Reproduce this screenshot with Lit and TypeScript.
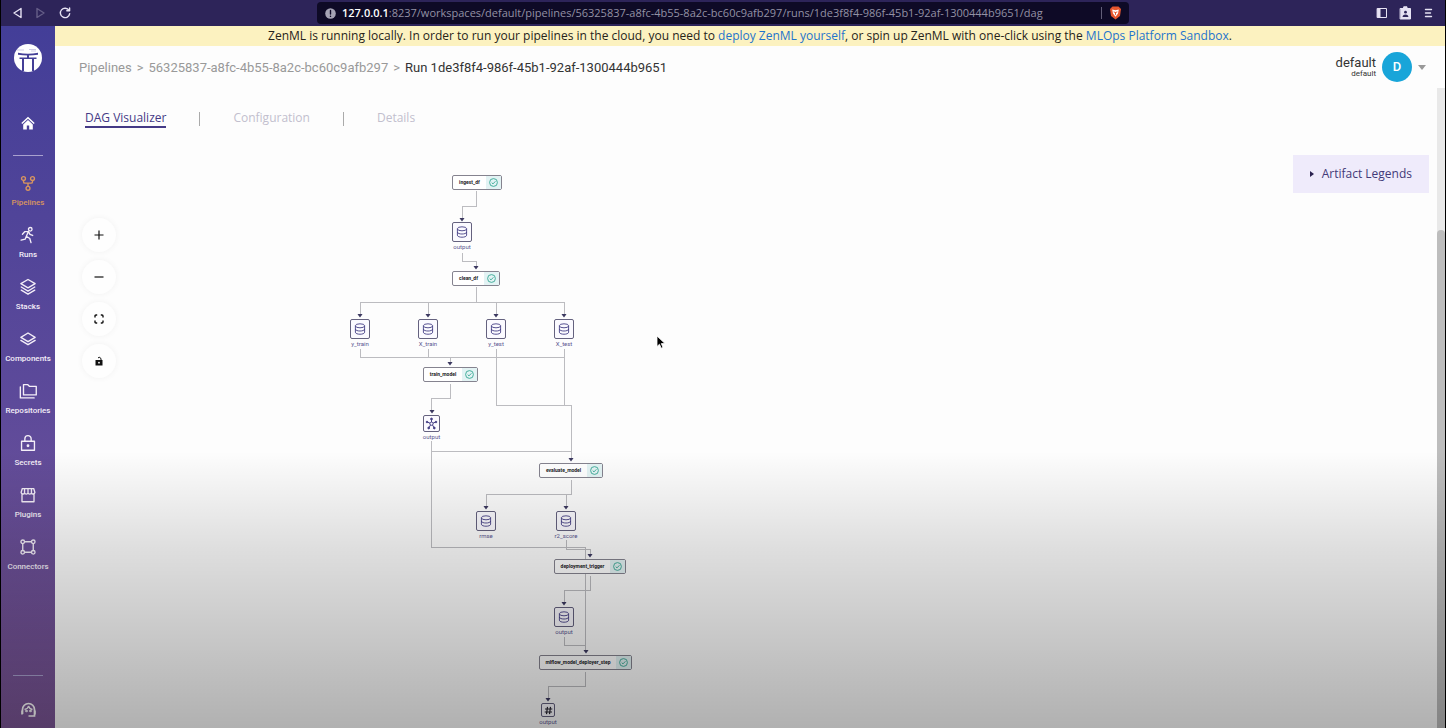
import { LitElement, html, css, svg } from "lit";
import { customElement, property, state } from "lit/decorators.js";
import { classMap } from "lit/directives/class-map.js";
import { styleMap } from "lit/directives/style-map.js";

const navIcons: Record<string, unknown> = {
  pipelines: svg`<circle cx="5" cy="5" r="2.6"/><circle cx="17" cy="5" r="2.6"/><circle cx="11" cy="18" r="2.6"/><path d="M5 7.6v1.6q0 2 2 2h8q2 0 2-2V7.6M11 11.2v4.2"/>`,
  runs: svg`<circle cx="14" cy="3.4" r="2.4"/><path d="M3.6 10l3-3.4 5-.2 2 3.8 3.6 1.4M11.4 6.6l-2.6 6 4.6 3 1.6 5.6M8.8 12.6l-1.6 4-5.4 1.2"/>`,
  stacks: svg`<path d="M11 1l9.5 5.6L11 12.2 1.5 6.6z"/><path d="M2 11l9 5.4 9-5.4M2 15.2l9 5.4 9-5.4"/>`,
  components: svg`<path d="M11 3l9.5 5.8L11 14.6 1.5 8.8z"/><path d="M1.5 12.8L11 18.6l9.5-5.8"/>`,
  repositories: svg`<path d="M5 2.4h5.4l2.4 2.4H22v11.4H5z"/><path d="M.8 5.4v14.8h18.4"/>`,
  secrets: svg`<path d="M2.4 8.6h17.2v12H2.4zM6.8 8.6V5.4a4.2 4.2 0 018.4 0v3.2"/><circle cx="11" cy="14.6" r="1"/>`,
  plugins: svg`<path d="M3.4 2.4h15.2l1.6 5.2a2.4 2.4 0 01-4.6.6 2.4 2.4 0 01-4.6 0 2.4 2.4 0 01-4.6 0 2.4 2.4 0 01-4.6-.6zM3 10v10h16V10M6.4 8V2.4M11 8V2.4M15.6 8V2.4"/>`,
  connectors: svg`<circle cx="4" cy="4" r="2.4"/><circle cx="18" cy="4" r="2.4"/><circle cx="4" cy="18" r="2.4"/><circle cx="18" cy="18" r="2.4"/><path d="M6.4 4h9.2M6.4 18h9.2M4 6.4v9.2M18 6.4v9.2"/>`,
};

const navItems = ["Pipelines", "Runs", "Stacks", "Components", "Repositories", "Secrets", "Plugins", "Connectors"];

interface GraphNode {
  kind: "step" | "data" | "model" | "hash";
  label: string;
  x: number;
  y: number;
  w: number;
}

const pan = { x: -55, y: -150 };

const nodes: GraphNode[] = [
  { kind: "step", label: "ingest_df", x: 452, y: 175, w: 50 },
  { kind: "data", label: "output", x: 452, y: 222, w: 20 },
  { kind: "step", label: "clean_df", x: 452, y: 271, w: 48 },
  { kind: "data", label: "y_train", x: 350, y: 319, w: 20 },
  { kind: "data", label: "X_train", x: 418, y: 319, w: 20 },
  { kind: "data", label: "y_test", x: 486, y: 319, w: 20 },
  { kind: "data", label: "X_test", x: 554, y: 319, w: 20 },
  { kind: "step", label: "train_model", x: 423, y: 367, w: 55 },
  { kind: "model", label: "output", x: 423, y: 415, w: 17 },
  { kind: "step", label: "evaluate_model", x: 539, y: 463, w: 64 },
  { kind: "data", label: "rmse", x: 476, y: 511, w: 20 },
  { kind: "data", label: "r2_score", x: 556, y: 511, w: 20 },
  { kind: "step", label: "deployment_trigger", x: 554, y: 559, w: 72 },
  { kind: "data", label: "output", x: 554, y: 607, w: 20 },
  { kind: "step", label: "mlflow_model_deployer_step", x: 539, y: 655, w: 93 },
  { kind: "hash", label: "output", x: 541, y: 703, w: 14 },
];

const edges = [
  "M476 191V206H462V220",
  "M462 253V261H476V268",
  "M476 287V302H360V316",
  "M476 287V302H428V316",
  "M476 287V302H496V316",
  "M476 287V302H564V316",
  "M360 349V357H450V364",
  "M428 349V357H450V364",
  "M496 349V357H450V364",
  "M564 349V357H450V364",
  "M496 349V405H571V460",
  "M564 349V405H571V460",
  "M450 384V398H431V412",
  "M431 441V451H571V460",
  "M431 441V547H585V652",
  "M571 480V494H486V508",
  "M571 480V494H566V508",
  "M566 540V549H590V556",
  "M590 576V590H564V604",
  "M564 637V645H585V652",
  "M585 672V686H548V700",
];

const arrows = [
  [462, 222], [476, 270], [360, 318], [428, 318], [496, 318], [564, 318], [450, 366], [432, 414],
  [571, 462], [486, 510], [566, 510], [590, 558], [564, 606], [586, 654], [548, 702],
];

@customElement("browser-bar")
export class BrowserBar extends LitElement {
  static styles = css`
    :host { display: grid; grid-template-columns: 1fr minmax(0, 812px) 1fr; align-items: center; height: 26px; background: #2d2459; color: #e6e2f3; font-family: "Open Sans", sans-serif; }
    button { padding: 0; border: 0; background: none; color: inherit; display: flex; }
    svg { display: block; fill: none; stroke: currentColor; stroke-width: 1.4; stroke-linejoin: round; stroke-linecap: round; }
    .thin { stroke-width: 1; }
    .left { display: flex; gap: 12px; padding-left: 10px; }
    .right { display: flex; justify-content: flex-end; align-items: center; gap: 11px; padding-right: 12px; }
    .off { opacity: 0.3; }
    .address { display: flex; align-items: center; gap: 6px; height: 22px; padding: 0 6px 0 8px; border-radius: 4px; background: #0e0a26; font-size: 11px; white-space: nowrap; }
    .url { flex: 1; overflow: hidden; color: #9391a4; }
    .host { color: #fff; font-weight: 600; }
    .rule { width: 1px; height: 12px; background: #625e78; }
  `;
  render() {
    return html`
      <div class="left">
        <button aria-label="Back"><svg width="12" height="12" viewBox="0 0 12 12"><path d="M10 1.5v9L3 6z"/></svg></button>
        <button aria-label="Forward" class="off"><svg width="12" height="12" viewBox="0 0 12 12"><path d="M2 1.5v9L9 6z"/></svg></button>
        <button aria-label="Reload"><svg width="12" height="12" viewBox="0 0 12 12"><path d="M10 3.4A4.7 4.7 0 1010.7 6.6M10.600 1v2.800H7.800"/></svg></button>
      </div>
      <div class="address">
        <svg width="11" height="11" viewBox="0 0 11 11" stroke="none"><circle cx="5.500" cy="5.500" r="5.300" fill="#a5a3b4" stroke="none"/><path d="M5.500 2.500v3.500M5.500 8.200v.2" stroke="#0e0a26"/></svg>
        <span class="url"><span class="host">127.0.0.1</span>:8237/workspaces/default/pipelines/56325837-a8fc-4b55-8a2c-bc60c9afb297/runs/1de3f8f4-986f-45b1-92af-1300444b9651/dag</span>
        <span class="rule"></span>
        <svg width="15" height="14" viewBox="0 0 13 14"><path d="M3.500.5h6l2.500 2.500-1 7-4.500 3.500L2 10 1 3z" fill="#e8562d" stroke="none"/><path d="M3.200 3.500l3.300.8 3.300-.8-.8 4-2.500 3.300L4 7.500z" fill="#fff" stroke="none"/><path d="M5 6l1.500.5L8 6M6.500 6.500v2" stroke="#e8562d" stroke-width="1"/></svg>
      </div>
      <div class="right">
        <button aria-label="Side panel"><svg class="thin" width="12" height="12" viewBox="0 0 12 12"><path d="M1.500 1.500h9v9h-9z"/><path d="M2 2h2v8H2z" fill="currentColor"/></svg></button>
        <button aria-label="Profile"><svg width="13" height="14" viewBox="0 0 13 14"><path d="M1.500 2.500h10v10.500h-10zM5 .8h3v2H5z" fill="currentColor" stroke-width="1"/><circle cx="6.500" cy="6.200" r="1.400" fill="#2d2459" stroke="none"/><path d="M3.600 11q0-2.600 2.900-2.600T9.400 11z" fill="#2d2459" stroke="none"/></svg></button>
        <button aria-label="Menu"><svg width="10" height="10" viewBox="0 0 10 10"><path d="M2.500 1.500h6M2.500 5h5M2.500 8.500h6"/></svg></button>
      </div>`;
  }
}

@customElement("side-nav")
export class SideNav extends LitElement {
  @property() active = "Pipelines";
  static styles = css`
    :host { box-sizing: border-box; display: flex; flex-direction: column; align-items: center; width: 54px; flex: none; padding: 18px 0 10px; background: linear-gradient(#433e98, #5d4a9a 54%, #7c5696); color: #f4eef8; font: 500 8px/10px Roboto, sans-serif; }
    a { color: inherit; text-decoration: none; display: flex; flex-direction: column; align-items: center; }
    svg { display: block; }
    .home { margin: 44px 0 25px; }
    .divider { width: 30px; height: 1px; background: #a9a1cf; flex: none; }
    nav { display: flex; flex-direction: column; gap: 18px; margin-top: 18px; }
    .item { gap: 6px; }
    .item svg { width: 18px; height: 18px; fill: none; stroke: currentColor; stroke-width: 1.8; stroke-linejoin: round; stroke-linecap: round; }
    .active { color: #d9955f; }
    .foot { margin-top: auto; }
    .support { margin-top: 25px; }
  `;
  render() {
    return html`
      <a href="#" aria-label="ZenML"><svg width="28" height="28" viewBox="0 0 28 28"><circle cx="14" cy="14" r="14" fill="#fff"/><path d="M4 8.800q10 1.800 20 0v2q-10 1.600-20 0zM5.500 13.400h17v1.600h-17zM8 15h2v12H8zM18 15h2v12h-2zM13 10.500h2V14h-2z" fill="#443f97"/><path d="M3 6h7M15 5.500h7M17 7h5" stroke="#b9b5da" stroke-width=".7"/></svg></a>
      <a class="home" href="#" aria-label="Home"><svg width="14" height="14" viewBox="0 0 14 14"><path d="M7 .8L.3 7l1 1L7 2.800 12.700 8l1-1z" fill="#fff"/><path d="M7 4L2.200 8.400V13.500h3.600V9.600h2.400v3.900h3.600V8.400z" fill="#fff"/></svg></a>
      <div class="divider"></div>
      <nav>
        ${navItems.map((n) => html`<a href="#" class=${classMap({ item: true, active: n === this.active })}><svg viewBox="-1 -1 24 24">${navIcons[n.toLowerCase()]}</svg>${n}</a>`)}
      </nav>
      <div class="divider foot"></div>
      <a class="support" href="#" aria-label="Support"><svg width="17" height="17" viewBox="0 0 17 17" fill="none" stroke="#fff" stroke-width="1.700"><path d="M2.500 13V8.500a6 6 0 0112 0V15H8.500M2 9.500v4M15 9.500v4"/><path d="M4.500 8.500q3.500-.5 4-3.500 1 3 4 3.500" stroke-width="1.300"/><circle cx="6.500" cy="10" r=".5"/><circle cx="10.500" cy="10" r=".5"/></svg></a>`;
  }
}

@customElement("dag-canvas")
export class DagCanvas extends LitElement {
  @state() private legendOpen = false;
  static styles = css`
    :host { position: relative; display: flex; justify-content: space-between; align-items: flex-start; flex: 1; min-height: 0; padding: 5px 8px 0 27px; overflow: hidden; font-family: Roboto, sans-serif; }
    .edges { position: absolute; inset: 0; width: 100%; height: 100%; fill: none; stroke: #bcbcc0; stroke-width: 1; shape-rendering: crispEdges; }
    .edges .tips { fill: #3c3960; stroke: none; shape-rendering: auto; }
    .node { position: absolute; display: flex; box-sizing: border-box; }
    .step { height: 15px; border: 1px solid #85838f; border-radius: 2px; background: #fff; font: 700 5px/13px Roboto, sans-serif; color: #1b1b1f; }
    .step .name { flex: 1; text-align: center; white-space: nowrap; }
    .status { flex: none; display: grid; place-items: center; width: 15px; background: #e3f3f4; }
    .artifact { flex-direction: column; align-items: center; gap: 1px; font-size: 6px; line-height: 7px; color: #5a5590; }
    .box { box-sizing: border-box; display: grid; place-items: center; width: 100%; aspect-ratio: 1; border: 1px solid #65627f; border-radius: 2px; background: #fbfaff; color: #443e85; }
    .artifact .name { white-space: nowrap; }
    svg { display: block; }
    .controls { position: relative; display: flex; flex-direction: column; gap: 8px; padding-top: 63px; }
    .controls button { display: grid; place-items: center; width: 34px; height: 34px; padding: 0; border: 0; border-radius: 50%; background: #fefefe; box-shadow: 0 0 6px rgba(0, 0, 0, 0.05); color: #111; }
    .legend { position: relative; display: flex; align-items: center; gap: 8px; height: 38px; padding: 0 17px; border: 0; background: #efebfb; color: #433a78; font: 400 12px/16px "Open Sans", sans-serif; }
    .tri { border: 3px solid transparent; border-left: 4px solid #2b2250; border-right: 0; }
  `;
  private glyph(kind: string) {
    if (kind === "data")
      return html`<svg width="12" height="12" viewBox="0 0 12 12" fill="none" stroke="currentColor" stroke-width=".9"><ellipse cx="6" cy="2.800" rx="4.600" ry="2"/><path d="M1.400 2.800v6.400c0 2.700 9.200 2.700 9.200 0V2.800M1.400 6c0 2.700 9.200 2.700 9.200 0"/></svg>`;
    if (kind === "model")
      return html`<svg width="13" height="13" viewBox="0 0 13 13" fill="currentColor" stroke="currentColor" stroke-width="1"><circle cx="6.500" cy="6.700" r="1.600" fill="none"/><path d="M6.500 5V2.500M5 6.200L2.300 5M8 6.200L10.700 5M5.500 8L4 10.600M7.500 8L9 10.600"/><circle cx="6.500" cy="2" r=".9"/><circle cx="2" cy="5" r=".8"/><circle cx="11" cy="5" r=".8"/><circle cx="3.700" cy="11" r=".9"/><circle cx="9.300" cy="11" r=".9"/></svg>`;
    return html`<svg width="9" height="9" viewBox="0 0 9 9" fill="none" stroke="#26242f" stroke-width="1.200"><path d="M3.500.8l-1 7.400M6.500.8l-1 7.400M1 3h7.300M.7 6H8"/></svg>`;
  }
  private node(n: GraphNode) {
    const place = styleMap({ left: `${n.x + pan.x}px`, top: `${n.y + pan.y}px`, width: `${n.w}px` });
    if (n.kind === "step")
      return html`<div class="node step" style=${place}><span class="name">${n.label}</span><span class="status"><svg width="9" height="9" viewBox="0 0 9 9" fill="none" stroke="#35a893" stroke-width=".9"><circle cx="4.500" cy="4.500" r="3.900"/><path d="M2.700 4.600l1.300 1.300 2.400-2.600"/></svg></span></div>`;
    return html`<div class="node artifact" style=${place}><span class="box">${this.glyph(n.kind)}</span><span class="name">${n.label}</span></div>`;
  }
  render() {
    return html`
      <svg class="edges" aria-hidden="true"><g transform="translate(${pan.x} ${pan.y})">
        ${edges.map((d) => svg`<path d=${d}/>`)}
        <g class="tips">${arrows.map(([x, y]) => svg`<path d="M${x - 2.5} ${y - 4}h5l-1 1.500-1.500 2-1.500-2z"/>`)}</g>
      </g></svg>
      ${nodes.map((n) => this.node(n))}
      <div class="controls">
        <button aria-label="Zoom in"><svg width="10" height="10" viewBox="0 0 10 10" stroke="currentColor" stroke-width="1.200"><path d="M5 .5v9M.5 5h9"/></svg></button>
        <button aria-label="Zoom out"><svg width="10" height="10" viewBox="0 0 10 10" stroke="currentColor" stroke-width="1.200"><path d="M.5 5h9"/></svg></button>
        <button aria-label="Fit view"><svg width="10" height="10" viewBox="0 0 10 10" fill="none" stroke="currentColor" stroke-width="1.400"><path d="M1 3.400V2q0-1 1-1h1.200M6.800 1H8q1 0 1 1v1.400M9 6.600V8q0 1-1 1H6.800M3.200 9H2Q1 9 1 8V6.600"/></svg></button>
        <button aria-label="Toggle interactivity"><svg width="8" height="10" viewBox="0 0 8 10"><path d="M.5 4h7v5.500h-7z" fill="currentColor"/><path d="M6 4V2.500L4.200 1.200 3 2" fill="none" stroke="currentColor"/><circle cx="4" cy="6.700" r=".9" fill="#fff"/></svg></button>
      </div>
      <button class="legend" aria-expanded=${this.legendOpen} @click=${() => (this.legendOpen = !this.legendOpen)}><span class="tri"></span>Artifact Legends</button>`;
  }
}

@customElement("app-root")
export class AppRoot extends LitElement {
  static styles = css`
    :host { position: relative; box-sizing: border-box; display: flex; flex-direction: column; height: 100vh; overflow: hidden; border: solid #000; border-width: 0 1px; background: #fdfdfd; font: 400 13px/18px Roboto, sans-serif; color: #333; }
    a { color: inherit; text-decoration: none; }
    .shell { display: flex; flex: 1; min-height: 0; }
    main { display: flex; flex-direction: column; flex: 1; min-width: 0; }
    .banner { padding: 1px 0; background: #fcf2c0; color: #26231a; font-family: "Open Sans", sans-serif; font-size: 12px; text-align: center; white-space: nowrap; }
    .banner a { color: #1f74cc; }
    header { display: flex; align-items: center; justify-content: space-between; height: 42px; padding: 0 19px 0 24px; }
    .crumbs { display: flex; gap: 5px; padding-top: 2px; color: #999; }
    .current { color: #333; }
    .user { display: flex; align-items: center; gap: 6px; padding: 0; border: 0; background: none; font: 400 13px/14px Roboto, sans-serif; color: #333; text-align: right; }
    .user small { display: block; font-size: 8px; line-height: 8px; }
    .avatar { display: grid; place-items: center; width: 30px; height: 30px; border-radius: 50%; background: #18a5d9; color: #fff; font-weight: 500; }
    .caret { border: 4px solid transparent; border-top: 5px solid #999; border-bottom: 0; }
    .body { display: flex; flex: 1; min-height: 0; }
    .work { display: flex; flex-direction: column; flex: 1; min-width: 0; }
    .tabs { display: flex; align-items: center; gap: 33px; height: 62px; padding-left: 30px; color: #c2bfce; font-family: "Open Sans", sans-serif; font-size: 12px; }
    .tab { border-bottom: 2px solid transparent; line-height: 16px; }
    .on { color: #443a86; border-color: #443a86; }
    .sep { width: 1px; height: 14px; background: #aaa; }
    .scroll { width: 8px; padding-top: 142px; box-sizing: border-box; background: #e9e9e9; display: flex; }
    .thumb { flex: 1; background: #bdbdbd; border-radius: 4px 4px 0 0; }
    .shade { position: absolute; inset: 62% 0 0; background: linear-gradient(transparent, rgba(0, 0, 0, 0.12) 35%, rgba(0, 0, 0, 0.3)); pointer-events: none; }
    .pointer { position: absolute; left: 655px; top: 335px; }
  `;
  render() {
    return html`
      <browser-bar></browser-bar>
      <div class="shell">
        <side-nav></side-nav>
        <main>
          <div class="banner">ZenML is running locally. In order to run your pipelines in the cloud, you need to <a href="#">deploy ZenML yourself</a>, or spin up ZenML with one-click using the <a href="#">MLOps Platform Sandbox</a>.</div>
          <header>
            <nav class="crumbs"><a href="#">Pipelines</a><span>&gt;</span><a href="#">56325837-a8fc-4b55-8a2c-bc60c9afb297</a><span>&gt;</span><span class="current">Run 1de3f8f4-986f-45b1-92af-1300444b9651</span></nav>
            <button class="user"><span>default<small>default</small></span><span class="avatar">D</span><span class="caret"></span></button>
          </header>
          <div class="body">
            <div class="work">
              <nav class="tabs"><a class="tab on" href="#">DAG Visualizer</a><span class="sep"></span><a class="tab" href="#">Configuration</a><span class="sep"></span><a class="tab" href="#">Details</a></nav>
              <dag-canvas></dag-canvas>
            </div>
            <div class="scroll"><div class="thumb"></div></div>
          </div>
        </main>
      </div>
      <div class="shade"></div>
      <svg class="pointer" width="10" height="14" viewBox="0 0 10 14"><path d="M1 1v10.500l2.500-2.300 1.700 4 1.800-.8-1.700-3.800H9z" fill="#000" stroke="#fff" stroke-width=".8"/></svg>`;
  }
}
